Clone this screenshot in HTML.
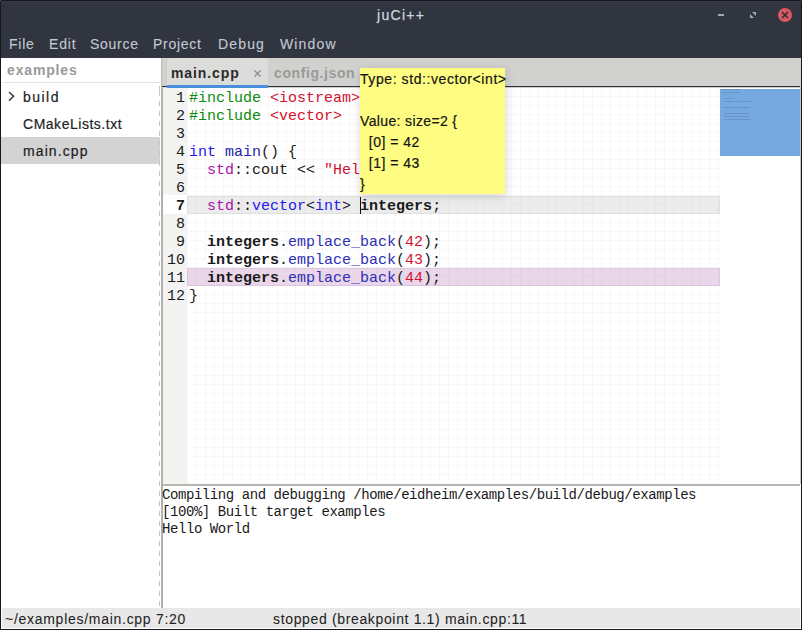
<!DOCTYPE html>
<html><head><meta charset="utf-8">
<style>
*{margin:0;padding:0;box-sizing:border-box}
html,body{width:802px;height:630px;overflow:hidden;background:#16181d}
body{position:relative;font-family:"Liberation Sans",sans-serif}
.a{position:absolute}
#win{left:1px;top:1px;width:800px;height:628px;background:#ffffff}
#c1{left:0;top:0;width:1px;height:1px;background:#4a5563}
#c2{left:801px;top:0;width:1px;height:1px;background:#4a5563}
#hdr{left:1px;top:1px;width:800px;height:57px;background:#31353f;border-top:1px solid #383c47}
#title{left:377px;top:7px;color:#cfd5df;font-size:14px;letter-spacing:1.3px;-webkit-text-stroke:0.25px #cfd5df}
.menu{top:36px;color:#c3c9d3;font-size:14px;-webkit-text-stroke:0.1px #c3c9d3}
#side{left:1px;top:58px;width:160px;height:550px;background:#fff}
#sidehdr{left:7px;top:62px;color:#9a9a9a;font-weight:bold;font-size:14px;letter-spacing:0.85px}
#sidesep{left:2px;top:82px;width:158px;height:1px;background:#e4e4e4}
#dash{left:159px;top:83px;width:1px;height:525px;background:repeating-linear-gradient(to bottom,#c6c6c6 0 5px,transparent 5px 10px);background-position:0 8px}
.item{left:23px;color:#1e1e1e;font-size:14px;-webkit-text-stroke:0.2px #1e1e1e}
#sel{left:1px;top:137px;width:159px;height:27px;background:#d3d3d3}
#psep{left:161px;top:88px;width:2px;height:520px;background:#b0b1ac}
#tabbar{left:161px;top:58px;width:640px;height:30px;background:#d1d1cf}
#tabline{left:162px;top:86px;width:638px;height:1px;background:#2e3038}
#tab{left:167px;top:58px;width:101px;height:27px;background:#dcdcda;border-radius:4px 4px 0 0}
#tabul{left:167px;top:85px;width:101px;height:3px;background:#4a8fdb}
#tabt{left:171px;top:65px;color:#2a2a2a;font-weight:bold;font-size:14px;letter-spacing:0.91px}
#tabx{left:254px;top:70px;width:7px;height:7px}
#tab2t{left:274px;top:65px;color:#9a9a98;font-weight:bold;font-size:14px;letter-spacing:0.6px}
#editor{left:162px;top:88px;width:638px;height:396px;background:#fff;overflow:hidden}
#gutter{left:0;top:0;width:25px;height:396px;background:#f3f3f2}
#grid{left:25px;top:0;width:533px;height:396px;
 background-image:linear-gradient(to right,#f7f7f7 1px,transparent 1px),linear-gradient(to bottom,#f7f7f7 1px,transparent 1px);
 background-size:9px 9px;background-position:0 -1px}
#curline{left:25px;top:108px;width:533px;height:18px;background:rgba(200,200,200,0.35);border:1px solid #e0e0e0}
#bpline{left:25px;top:180px;width:533px;height:18px;background:rgba(205,160,205,0.42);border:1px solid rgba(200,150,200,0.25)}
#code{left:27px;top:2px;font-family:"Liberation Mono",monospace;font-size:15px;line-height:18px;white-space:pre;color:#1a1a1a}
#nums{left:0;top:2px;width:23px;text-align:right;font-family:"Liberation Mono",monospace;font-size:15px;line-height:18px;white-space:pre;color:#1a1a1a}
#minimap{left:558px;top:1px;width:80px;height:67px;background:#77a9e1}
#rborder{left:800px;top:88px;width:1px;height:396px;background:#c4c4c4}
#hsep{left:162px;top:484px;width:638px;height:2px;background:#b6b7b1}
#term{left:162px;top:487px;font-family:"Liberation Mono",monospace;font-size:14px;letter-spacing:-0.43px;line-height:17px;white-space:pre;color:#1a1a1a}
#status{left:2px;top:608px;width:798px;height:20px;background:#e8e8e8}
.st{top:611px;color:#222;font-size:14px;-webkit-text-stroke:0.05px #222}
#tip{left:360px;top:68px;width:145px;height:126px;background:#fffc82;box-shadow:1px 2px 9px rgba(0,0,0,0.16);color:#141414;-webkit-text-stroke:0.2px #141414;font-size:14px;line-height:21px;white-space:pre;letter-spacing:0.5px;padding-top:1px}
.g{color:#0c8c0c}.r{color:#d4102e}.b{color:#2418f0}.nb{color:#2424a8}.p{color:#aa12aa}.m{color:#2e30b4}.gr{color:#555}
.bo{font-weight:bold}
</style></head><body>
<div class="a" id="win"></div>
<div class="a" id="hdr"></div>
<div class="a" id="c1"></div><div class="a" id="c2"></div>
<div class="a" id="title">juCi++</div>
<div class="a menu" style="left:9px;letter-spacing:0.77px">File</div>
<div class="a menu" style="left:49px;letter-spacing:0.83px">Edit</div>
<div class="a menu" style="left:90px;letter-spacing:0.72px">Source</div>
<div class="a menu" style="left:153px;letter-spacing:0.73px">Project</div>
<div class="a menu" style="left:218px;letter-spacing:1.15px">Debug</div>
<div class="a menu" style="left:280px;letter-spacing:1.14px">Window</div>
<!-- window buttons -->
<div class="a" style="left:718px;top:14px;width:6px;height:2px;background:#a3a7b0"></div>
<svg class="a" style="left:750px;top:12px" width="6" height="6" viewBox="0 0 6 6"><path d="M2 0H6V4Z M0 2L4 6H0Z" fill="#a3a7b0"/></svg>
<svg class="a" style="left:778px;top:8px" width="14" height="14" viewBox="0 0 14 14"><circle cx="7" cy="7" r="7" fill="#da5860"/><path d="M4 4L10 10M10 4L4 10" stroke="#2b2f3a" stroke-width="1.6"/></svg>

<div class="a" id="side"></div>
<div class="a" id="sidehdr">examples</div>
<div class="a" id="sidesep"></div>
<div class="a" id="sel"></div>
<svg class="a" style="left:8px;top:91px" width="8" height="11" viewBox="0 0 8 11"><path d="M1 1L5.6 5.3L1 9.6" stroke="#484848" stroke-width="1.6" fill="none"/></svg>
<div class="a item" style="top:89px;left:23px;letter-spacing:1.47px">build</div>
<div class="a item" style="top:116px;letter-spacing:0.52px">CMakeLists.txt</div>
<div class="a item" style="top:143px;left:23px;letter-spacing:1.1px">main.cpp</div>
<div class="a" id="dash"></div>

<div class="a" id="tabbar"></div>
<div class="a" id="tabline"></div>
<div class="a" id="tab"></div>
<div class="a" id="tabul"></div>
<div class="a" id="tabt">main.cpp</div>
<svg class="a" id="tabx" viewBox="0 0 7 7"><path d="M0.5 0.5L6.5 6.5M6.5 0.5L0.5 6.5" stroke="#929292" stroke-width="1.5"/></svg>
<div class="a" id="tab2t">config.json</div>

<div class="a" id="editor">
 <div class="a" id="gutter"></div>
 <div class="a" id="grid"></div>
 <div class="a" style="left:0;top:107px;width:25px;height:19px;background:#fff"></div>
 <div class="a" id="curline"></div>
 <div class="a" id="bpline"></div>
 <div class="a" id="nums">1
2
3
4
5
6
<b>7</b>
8
9
10
11
12</div>
 <div class="a" id="code"><span class="g">#include</span> <span class="r">&lt;iostream&gt;</span>
<span class="g">#include</span> <span class="r">&lt;vector&gt;</span>

<span class="b">int</span> <span class="nb">main</span>() {
  <span class="p">std</span>::cout &lt;&lt; <span class="r">"Hello World\n"</span>;

  <span class="p">std</span>::<span class="b">vector</span>&lt;<span class="b">int</span>&gt; <span class="bo">integers</span>;

  <span class="bo">integers</span>.<span class="m">emplace_back</span>(<span class="r">42</span>);
  <span class="bo">integers</span>.<span class="m">emplace_back</span>(<span class="r">43</span>);
  <span class="bo">integers</span>.<span class="m">emplace_back</span>(<span class="r">44</span>);
}</div>
 <div class="a" id="minimap"><div class="a" style="left:2px;top:0px;width:8px;height:1px;background:#34466a;opacity:.22"></div><div class="a" style="left:11px;top:0px;width:10px;height:1px;background:#34466a;opacity:.22"></div><div class="a" style="left:2px;top:3px;width:8px;height:1px;background:#34466a;opacity:.22"></div><div class="a" style="left:11px;top:3px;width:8px;height:1px;background:#34466a;opacity:.22"></div><div class="a" style="left:2px;top:9px;width:3px;height:1px;background:#34466a;opacity:.22"></div><div class="a" style="left:6px;top:9px;width:6px;height:1px;background:#34466a;opacity:.22"></div><div class="a" style="left:13px;top:9px;width:1px;height:1px;background:#34466a;opacity:.22"></div><div class="a" style="left:4px;top:12px;width:3px;height:1px;background:#34466a;opacity:.22"></div><div class="a" style="left:7px;top:12px;width:6px;height:1px;background:#34466a;opacity:.22"></div><div class="a" style="left:14px;top:12px;width:2px;height:1px;background:#34466a;opacity:.22"></div><div class="a" style="left:17px;top:12px;width:14px;height:1px;background:#34466a;opacity:.22"></div><div class="a" style="left:31px;top:12px;width:1px;height:1px;background:#34466a;opacity:.22"></div><div class="a" style="left:4px;top:18px;width:3px;height:1px;background:#34466a;opacity:.22"></div><div class="a" style="left:7px;top:18px;width:2px;height:1px;background:#34466a;opacity:.22"></div><div class="a" style="left:9px;top:18px;width:6px;height:1px;background:#34466a;opacity:.22"></div><div class="a" style="left:15px;top:18px;width:5px;height:1px;background:#34466a;opacity:.22"></div><div class="a" style="left:21px;top:18px;width:8px;height:1px;background:#34466a;opacity:.22"></div><div class="a" style="left:29px;top:18px;width:1px;height:1px;background:#34466a;opacity:.22"></div><div class="a" style="left:4px;top:24px;width:8px;height:1px;background:#34466a;opacity:.22"></div><div class="a" style="left:12px;top:24px;width:13px;height:1px;background:#34466a;opacity:.22"></div><div class="a" style="left:25px;top:24px;width:4px;height:1px;background:#34466a;opacity:.22"></div><div class="a" style="left:29px;top:24px;width:1px;height:1px;background:#34466a;opacity:.22"></div><div class="a" style="left:4px;top:27px;width:8px;height:1px;background:#34466a;opacity:.22"></div><div class="a" style="left:12px;top:27px;width:13px;height:1px;background:#34466a;opacity:.22"></div><div class="a" style="left:25px;top:27px;width:4px;height:1px;background:#34466a;opacity:.22"></div><div class="a" style="left:29px;top:27px;width:1px;height:1px;background:#34466a;opacity:.22"></div><div class="a" style="left:4px;top:30px;width:8px;height:1px;background:#34466a;opacity:.22"></div><div class="a" style="left:12px;top:30px;width:13px;height:1px;background:#34466a;opacity:.22"></div><div class="a" style="left:25px;top:30px;width:4px;height:1px;background:#34466a;opacity:.22"></div><div class="a" style="left:29px;top:30px;width:1px;height:1px;background:#34466a;opacity:.22"></div><div class="a" style="left:2px;top:33px;width:1px;height:1px;background:#34466a;opacity:.22"></div></div>
</div>
<div class="a" id="rborder"></div>
<div class="a" id="psep"></div>
<div class="a" style="left:161px;top:58px;width:1px;height:30px;background:#b9b9b6"></div>
<div class="a" style="left:166px;top:62px;width:1px;height:23px;background:#cdcdcb"></div>
<div class="a" style="left:360px;top:197px;width:1px;height:17px;background:#111"></div>
<div class="a" id="hsep"></div>
<div class="a" id="term">Compiling and debugging /home/eidheim/examples/build/debug/examples
[100%] Built target examples
Hello World</div>
<div class="a" id="status"></div>
<div class="a st" style="left:5px;letter-spacing:0.72px">~/examples/main.cpp 7:20</div>
<div class="a st" style="left:273px;letter-spacing:0.65px">stopped (breakpoint 1.1) main.cpp:11</div>

<div class="a" id="tip"><div style="letter-spacing:0.58px">Type: std::vector&lt;int&gt;</div><div>&nbsp;</div><div style="letter-spacing:0.36px">Value: size=2 {</div><div>  [0] = 42</div><div>  [1] = 43</div><div>}</div></div>
</body></html>
